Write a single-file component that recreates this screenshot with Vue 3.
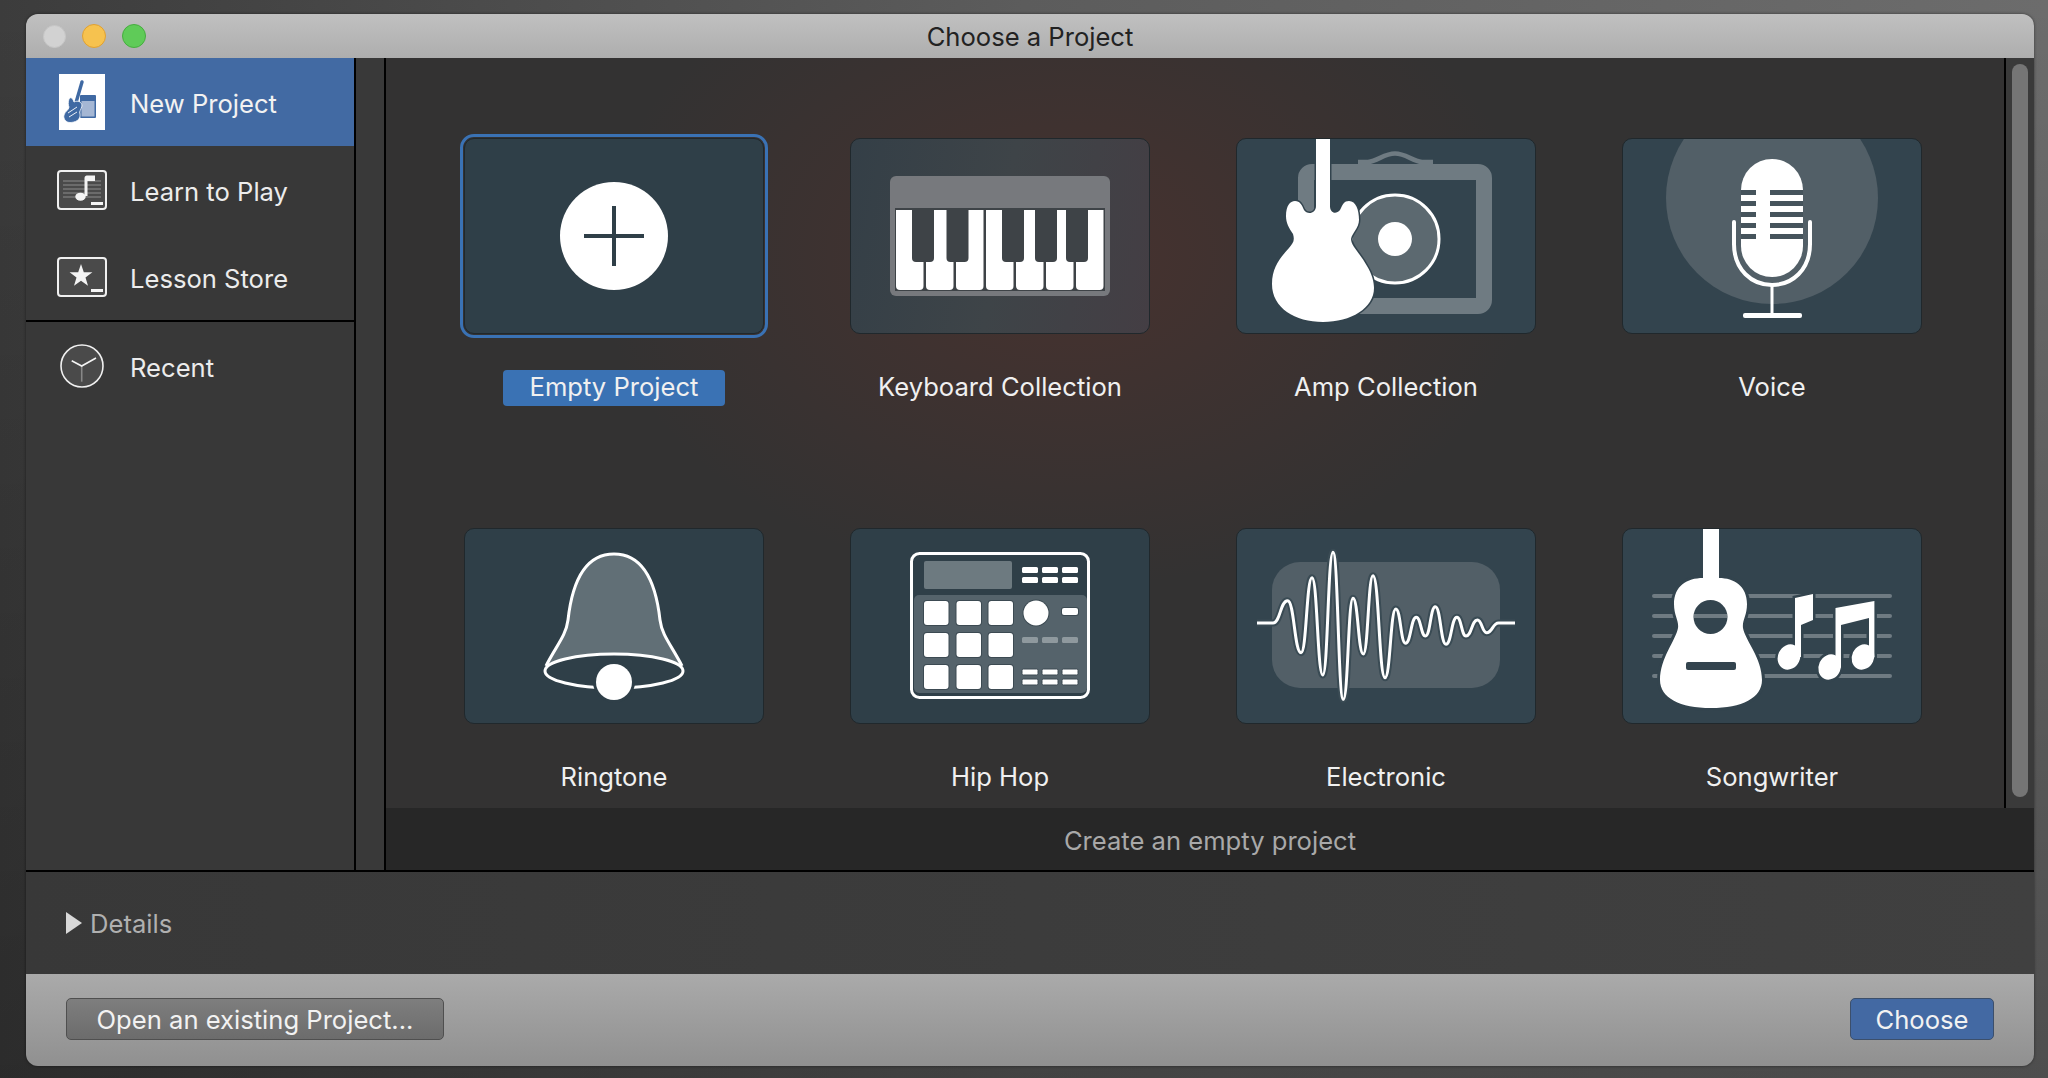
<template>
  <div class="window">
    <header class="titlebar">
      <div class="lights">
        <span class="light grey"></span>
        <span class="light yellow"></span>
        <span class="light green"></span>
      </div>
      <div class="title">Choose a Project</div>
    </header>

    <div class="middle">
      <aside class="sidebar">
        <div class="side-group">
          <div class="side-row active">
            <svg class="side-icon" width="50" height="56" viewBox="0 0 50 56">
              <rect x="2" y="0" width="46" height="56" fill="#fff" />
              <rect x="23" y="21" width="16" height="23" rx="1" fill="#3f69a3" />
              <rect x="24.5" y="27" width="13" height="15.5" fill="#a5b7d4" />
              <path d="M25 8 L18 32" stroke="#3f69a3" stroke-width="3.4" stroke-linecap="round" />
              <path d="M12 25 C14 22 16 25 17 28 C21 26 25 28 25 32 C24 36 22 37 23 40 C24 46 18 48.5 13 48.5 C9 48.5 6 45 7 41 C8 37 12 36 12 33 C11 31 11 28 12 25 Z" fill="#3f69a3" stroke="#fff" stroke-width="0.8" />
              <path d="M11 39 L20 33 M12 43 L20 38" stroke="#fff" stroke-width="0.9" />
            </svg>
            <span>New Project</span>
          </div>
          <div class="side-row">
            <svg class="side-icon" width="50" height="40" viewBox="0 0 50 40">
              <rect x="1" y="1" width="48" height="38" rx="3" fill="#4a4a4a" stroke="#f0f0f0" stroke-width="2" />
              <path v-for="y in [11, 15, 19, 23, 27]" :key="y" :d="`M6 ${y} H44`" stroke="#8c8c8c" stroke-width="1" />
              <ellipse cx="23.5" cy="26.7" rx="5.2" ry="4" fill="#f4f4f4" />
              <path d="M27.5 26 V8 C27.5 6 29 5.5 31 5.5 H38 V11 H30.5 V26 Z" fill="#f4f4f4" />
              <rect x="34" y="32" width="12" height="3" fill="#f4f4f4" />
            </svg>
            <span>Learn to Play</span>
          </div>
          <div class="side-row short">
            <svg class="side-icon" width="50" height="40" viewBox="0 0 50 40">
              <rect x="1" y="1" width="48" height="38" rx="3" fill="#4a4a4a" stroke="#f0f0f0" stroke-width="2" />
              <polygon points="24,7 26.8,15.2 35.4,15.3 28.5,20.5 31,28.7 24,23.8 17,28.7 19.5,20.5 12.6,15.3 21.2,15.2" fill="#f4f4f4" />
              <rect x="34" y="32" width="12" height="3" fill="#f4f4f4" />
            </svg>
            <span>Lesson Store</span>
          </div>
        </div>
        <div class="side-row">
          <svg class="side-icon" width="50" height="44" viewBox="0 0 50 44">
            <circle cx="25" cy="22" r="21" fill="#4a4a4a" stroke="#f0f0f0" stroke-width="1.6" />
            <path d="M24.7 22 V37.7" stroke="#888" stroke-width="1.6" />
            <path d="M14.7 16.7 L24.7 22 L39 14" stroke="#f4f4f4" stroke-width="1.6" fill="none" />
          </svg>
          <span>Recent</span>
        </div>
      </aside>

      <div class="strip"></div>

      <section class="content">
        <div class="content-top">
          <div class="grid">
            <div v-for="p in projects" :key="p.id" class="cell">
              <div class="tile" :class="[p.id, { selected: p.id === selected }]">
                <svg width="298" height="194" viewBox="1 1 298 194">
                  <g v-if="p.id === 'empty'">
                    <circle cx="150" cy="98" r="54" fill="#fff" />
                    <path d="M120 98 H180 M150 68 V128" stroke="#2f3f48" stroke-width="4" />
                  </g>

                  <g v-else-if="p.id === 'keyboard'" transform="translate(1 0)">
                    <path d="M39 44 a6 6 0 0 1 6 -6 H253 a6 6 0 0 1 6 6 V152 a6 6 0 0 1 -6 6 H45 a6 6 0 0 1 -6 -6 Z" fill="#77797d" />
                    <rect x="44" y="70" width="210" height="83" fill="#3e4347" />
                    <path v-for="i in 7" :key="i" :d="`M${15 + i * 30} 72 h27.5 v76 a4 4 0 0 1 -4 4 h-19.5 a4 4 0 0 1 -4 -4 Z`" fill="#fff" />
                    <path v-for="x in blackKeys" :key="x" :d="`M${x} 70 h22 v50 a4 4 0 0 1 -4 4 h-14 a4 4 0 0 1 -4 -4 Z`" fill="#3e4347" />
                  </g>

                  <g v-else-if="p.id === 'amp'">
                    <path d="M122 24 H132 C142 23 148 15.5 159 15.5 C170 15.5 176 23 186 24 H197" fill="none" stroke="#6f7b82" stroke-width="4.5" />
                    <rect x="70" y="34" width="178" height="134" rx="6" fill="none" stroke="#6f7b82" stroke-width="16" />
                    <circle cx="159" cy="101" r="44" fill="#5c6970" stroke="#fff" stroke-width="3" />
                    <circle cx="159" cy="101" r="17" fill="#fff" />
                    <path d="M80 0 H94 V68 C94 75 100 77 104 72 C107 66 108 63 113 63 C120 63 123 72 123 82 C123 90 116 95 115 101 C115 108 124 115 131 128 C136 136 138 144 138 150 C138 170 115 184 87 184 C59 184 36 170 36 146 C36 128 46 118 53 110 C57 105 59 103 57 96 C53 90 50 85 50 78 C50 68 54 63 59 63 C64 63 66 67 68 72 C71 77 80 76 80 68 Z" fill="#fff" stroke="#33444e" stroke-width="3" paint-order="stroke" />
                  </g>

                  <g v-else-if="p.id === 'voice'">
                    <circle cx="150" cy="60" r="106" fill="#525f67" />
                    <rect x="119" y="21" width="62" height="118" rx="31" fill="#fff" />
                    <g v-for="y in [52, 63, 74, 85, 96]" :key="y">
                      <rect x="119" :y="y" width="15" height="5" fill="#46545c" />
                      <rect x="148" :y="y" width="33" height="5" fill="#46545c" />
                    </g>
                    <path d="M112 84 V106 C112 132 130 147 150 147 C170 147 188 132 188 106 V84" fill="none" stroke="#fff" stroke-width="4" stroke-linecap="round" />
                    <path d="M150 147 V176" stroke="#fff" stroke-width="3" />
                    <rect x="121" y="175" width="59" height="5" rx="2" fill="#fff" />
                  </g>

                  <g v-else-if="p.id === 'ringtone'">
                    <path d="M83 136 C92 118 102 108 104 92 C106 74 113 26 150 26 C187 26 194 74 196 92 C198 108 208 118 217 136 Z" fill="#616f76" />
                    <path d="M82 138 C92 118 102 108 104 92 C106 74 113 26 150 26 C187 26 194 74 196 92 C198 108 208 118 218 138" fill="none" stroke="#fff" stroke-width="3" />
                    <ellipse cx="150" cy="143" rx="69" ry="17" fill="#2f3f48" stroke="#fff" stroke-width="3" />
                    <circle cx="150" cy="154" r="21" fill="#2f3f48" />
                    <circle cx="150" cy="154" r="18" fill="#fff" />
                  </g>

                  <g v-else-if="p.id === 'hiphop'" transform="translate(1 1)">
                    <rect x="63" y="66" width="173" height="98" rx="5" fill="#55636b" />
                    <rect x="60.5" y="24.5" width="177" height="144" rx="8" fill="none" stroke="#fff" stroke-width="3" />
                    <rect x="73" y="32" width="88" height="28" rx="2" fill="#6d7a80" />
                    <g v-for="x in [171, 191, 211]" :key="x">
                      <rect :x="x" y="38" width="16" height="6" rx="1.5" fill="#fff" />
                      <rect :x="x" y="48" width="16" height="6" rx="1.5" fill="#fff" />
                      <rect :x="x" y="108" width="16" height="6" rx="1.5" fill="#8f999e" />
                      <rect :x="x" y="140" width="16" height="6" rx="1.5" fill="#fff" stroke="#3c4a52" stroke-width="1" />
                      <rect :x="x" y="150" width="16" height="6" rx="1.5" fill="#fff" stroke="#3c4a52" stroke-width="1" />
                    </g>
                    <g v-for="y in [72, 104, 136]" :key="y">
                      <rect v-for="x in [73, 105.5, 137.5]" :key="x" :x="x" :y="y" width="24.5" height="24" rx="3" fill="#fff" stroke="#3c4a52" stroke-width="2" paint-order="stroke" />
                    </g>
                    <circle cx="185" cy="84" r="12.5" fill="#fff" stroke="#3c4a52" stroke-width="2" paint-order="stroke" />
                    <rect x="211" y="79" width="16" height="7" rx="2" fill="#fff" stroke="#3c4a52" stroke-width="2" paint-order="stroke" />
                  </g>

                  <g v-else-if="p.id === 'electronic'">
                    <rect x="36" y="34" width="228" height="126" rx="28" fill="#525f67" />
                    <path :d="wavePath" fill="none" stroke="#3a4b54" stroke-width="7" />
                    <path :d="wavePath" fill="none" stroke="#fff" stroke-width="3" />
                  </g>

                  <g v-else-if="p.id === 'songwriter'">
                    <rect v-for="y in [66, 86, 106, 126, 146]" :key="y" x="30" :y="y" width="240" height="4" rx="2" fill="#6f7b82" />
                    <path d="M81 0 H97 V50 C112 50 125 58 125 76 C125 88 120 92 121 100 C123 112 140 130 140 152 C140 170 120 180 89 180 C58 180 38 170 38 152 C38 130 54 112 56 100 C57 92 52 88 52 76 C52 58 65 50 81 50 Z" fill="#fff" stroke="#33444e" stroke-width="6" paint-order="stroke" />
                    <circle cx="88.5" cy="89" r="17" fill="#33444e" />
                    <rect x="72" y="86" width="33" height="4" fill="#6f7b82" />
                    <rect x="64" y="134" width="50" height="8" rx="2" fill="#33444e" />
                    <!-- the dark halo goes under all note shapes so heads join their stems -->
                    <g v-for="layer in noteLayers" :key="layer.fill" :fill="layer.fill" :stroke="layer.stroke" :stroke-width="layer.width">
                      <path d="M173 129 V70 L191 66 V92 L179 97 V129 Z" />
                      <ellipse cx="167" cy="129" rx="11" ry="13" transform="rotate(25 167 129)" />
                      <path d="M213.5 139 V80 L252.4 73 V129 H247 V90 L219 97 V139 Z" />
                      <ellipse cx="207.7" cy="139" rx="11" ry="13" transform="rotate(25 207.7 139)" />
                      <ellipse cx="241" cy="129" rx="11" ry="13" transform="rotate(25 241 129)" />
                    </g>
                  </g>
                </svg>
              </div>
              <div class="label" :class="{ selected: p.id === selected }">{{ p.label }}</div>
            </div>
          </div>
          <div class="scrollbar"><div class="thumb"></div></div>
        </div>
        <div class="status">Create an empty project</div>
      </section>
    </div>

    <div class="details">
      <span class="arrow"></span>
      <span>Details</span>
    </div>

    <footer class="footer">
      <button class="btn">Open an existing Project...</button>
      <button class="btn primary">Choose</button>
    </footer>
  </div>
</template>

<script setup>
const selected = 'empty'

const projects = [
  { id: 'empty', label: 'Empty Project' },
  { id: 'keyboard', label: 'Keyboard Collection' },
  { id: 'amp', label: 'Amp Collection' },
  { id: 'voice', label: 'Voice' },
  { id: 'ringtone', label: 'Ringtone' },
  { id: 'hiphop', label: 'Hip Hop' },
  { id: 'electronic', label: 'Electronic' },
  { id: 'songwriter', label: 'Songwriter' }
]

const blackKeys = [61, 95.5, 151, 184, 215]

const noteLayers = [
  { fill: '#33444e', stroke: '#33444e', width: 5 },
  { fill: '#fff', stroke: 'none', width: 0 }
]

// peaks and troughs of the waveform, joined with flat tangents
const wave = [
  [37, 95], [51.6, 72.7], [65.1, 124.7], [76, 49.7], [86.8, 147], [97, 24.3], [107.3, 171.3],
  [117, 70.3], [127.3, 126], [137, 47.7], [149, 149.7], [159.8, 81], [169.5, 115.3], [180.3, 89.3],
  [189.5, 108], [199.3, 78.7], [210, 116.3], [220.9, 89.3], [230, 108], [241.4, 92], [250.6, 104.7], [262.5, 95]
]

let wavePath = `M21 95 H${wave[0][0]}`
for (let i = 1; i < wave.length; i++) {
  const [x0, y0] = wave[i - 1]
  const [x1, y1] = wave[i]
  const mid = (x0 + x1) / 2
  wavePath += ` C${mid} ${y0} ${mid} ${y1} ${x1} ${y1}`
}
wavePath += ' H279'
</script>

<style>
html, body {
  margin: 0;
  height: 100%;
  overflow: hidden;
  background: linear-gradient(to bottom, rgba(0, 0, 0, 0), rgba(0, 0, 0, 0.28)), linear-gradient(to right, #3c3c3c, #5c5c5c 50%, #6c6c6c);
}
</style>

<style scoped>
.window {
  box-sizing: border-box;
  width: 2008px;
  height: 1052px;
  margin: 14px 0 0 26px;
  display: flex;
  flex-direction: column;
  border-radius: 12px;
  overflow: hidden;
  font-family: Inter, "Liberation Sans", sans-serif;
  font-size: 25.6px;
  box-shadow: 0 0 3px rgba(0, 0, 0, 0.5);
}

.titlebar {
  height: 44px;
  flex: none;
  display: grid;
  grid-template-columns: 1fr auto 1fr;
  align-items: center;
  background: linear-gradient(#c0c0c0, #aeaeae);
}

.lights {
  display: flex;
  align-items: center;
  padding-left: 17px;
  gap: 16px;
}

.light {
  box-sizing: border-box;
  width: 24px;
  height: 24px;
  border-radius: 50%;
  border: 1px solid;
}

.grey { width: 23px; height: 23px; background: #d2d2d2; border-color: #c6c6c6; }
.yellow { background: #f6c24f; border-color: #dfa032; }
.green { background: #5fcb58; border-color: #46ad3f; }

.title {
  color: #222;
  padding-top: 1px;
}

.middle {
  flex: 1;
  min-height: 0;
  display: flex;
  border-bottom: 2px solid #000;
}

.sidebar {
  box-sizing: border-box;
  width: 330px;
  flex: none;
  background: #383838;
  border-right: 2px solid #000;
}

.side-group {
  border-bottom: 2px solid #000;
}

.side-row {
  height: 88px;
  display: flex;
  align-items: center;
  gap: 23px;
  padding-left: 31px;
  color: #ececec;
}

.side-row span {
  padding-top: 2px;
}

.side-row.short {
  height: 86px;
}

.side-row.active {
  background: #426aa3;
  color: #f2f2f2;
}

.side-icon {
  flex: none;
}

.strip {
  box-sizing: border-box;
  width: 30px;
  flex: none;
  background: #393939;
  border-right: 2px solid #000;
}

.content {
  flex: 1;
  min-width: 0;
  display: flex;
  flex-direction: column;
}

.content-top {
  flex: 1;
  min-height: 0;
  display: flex;
}

.grid {
  flex: 1;
  display: grid;
  grid-template-columns: repeat(4, 300px);
  grid-auto-rows: 268px;
  column-gap: 86px;
  row-gap: 122px;
  padding: 80px 0 0 78px;
  background: radial-gradient(ellipse 470px 330px at 680px 200px, rgba(112, 50, 40, 0.33), rgba(112, 50, 40, 0)), #333232;
}

.cell {
  display: flex;
  flex-direction: column;
  align-items: center;
}

.tile {
  box-sizing: border-box;
  width: 300px;
  height: 196px;
  flex: none;
  border: 1px solid #20282c;
  border-radius: 10px;
  background: #2f3f48;
  overflow: hidden;
}

.tile svg {
  display: block;
}

.tile.selected {
  outline: 3px solid #3a72b4;
  outline-offset: 1px;
}

.tile.keyboard {
  background: linear-gradient(100deg, #343f47, #3e4448 50%, #443e44);
}

.tile.amp,
.tile.voice,
.tile.electronic,
.tile.songwriter {
  background: #33444e;
}

.label {
  box-sizing: border-box;
  height: 36px;
  margin-top: 36px;
  padding: 0 27px 3px;
  display: flex;
  align-items: center;
  border-radius: 4px;
  color: #f0f0f0;
}

.label.selected {
  background: #3a72b4;
}

.scrollbar {
  box-sizing: border-box;
  width: 30px;
  flex: none;
  padding: 6px 6px 0 6px;
  background: #3a3a3a;
  border-left: 2px solid #000;
}

.thumb {
  width: 16px;
  height: 733px;
  border-radius: 8px;
  background: #757575;
}

.status {
  box-sizing: border-box;
  height: 62px;
  flex: none;
  padding-top: 3px;
  display: flex;
  align-items: center;
  justify-content: center;
  background: #272727;
  color: #a9a9a9;
}

.details {
  height: 102px;
  flex: none;
  display: flex;
  align-items: center;
  gap: 8px;
  padding-left: 40px;
  background: linear-gradient(to right, #383838, #404040);
  color: #b0b0b0;
}

.arrow {
  width: 0;
  height: 0;
  border-left: 16px solid #d8d8d8;
  border-top: 11px solid transparent;
  border-bottom: 11px solid transparent;
}

.footer {
  height: 92px;
  flex: none;
  display: flex;
  align-items: flex-start;
  justify-content: space-between;
  box-sizing: border-box;
  padding: 24px 40px 0;
  background: linear-gradient(#aaaaaa, #909090);
}

.btn {
  box-sizing: border-box;
  height: 42px;
  width: 378px;
  border: 1px solid #4f4f4f;
  border-radius: 5px;
  background: linear-gradient(#7e7e7e, #6c6c6c);
  color: #f2f2f2;
  font-family: inherit;
  font-size: 25.6px;
  padding: 0;
}

.btn.primary {
  width: 144px;
  background: #4369a3;
  border-color: #3c4f6b;
}
</style>
